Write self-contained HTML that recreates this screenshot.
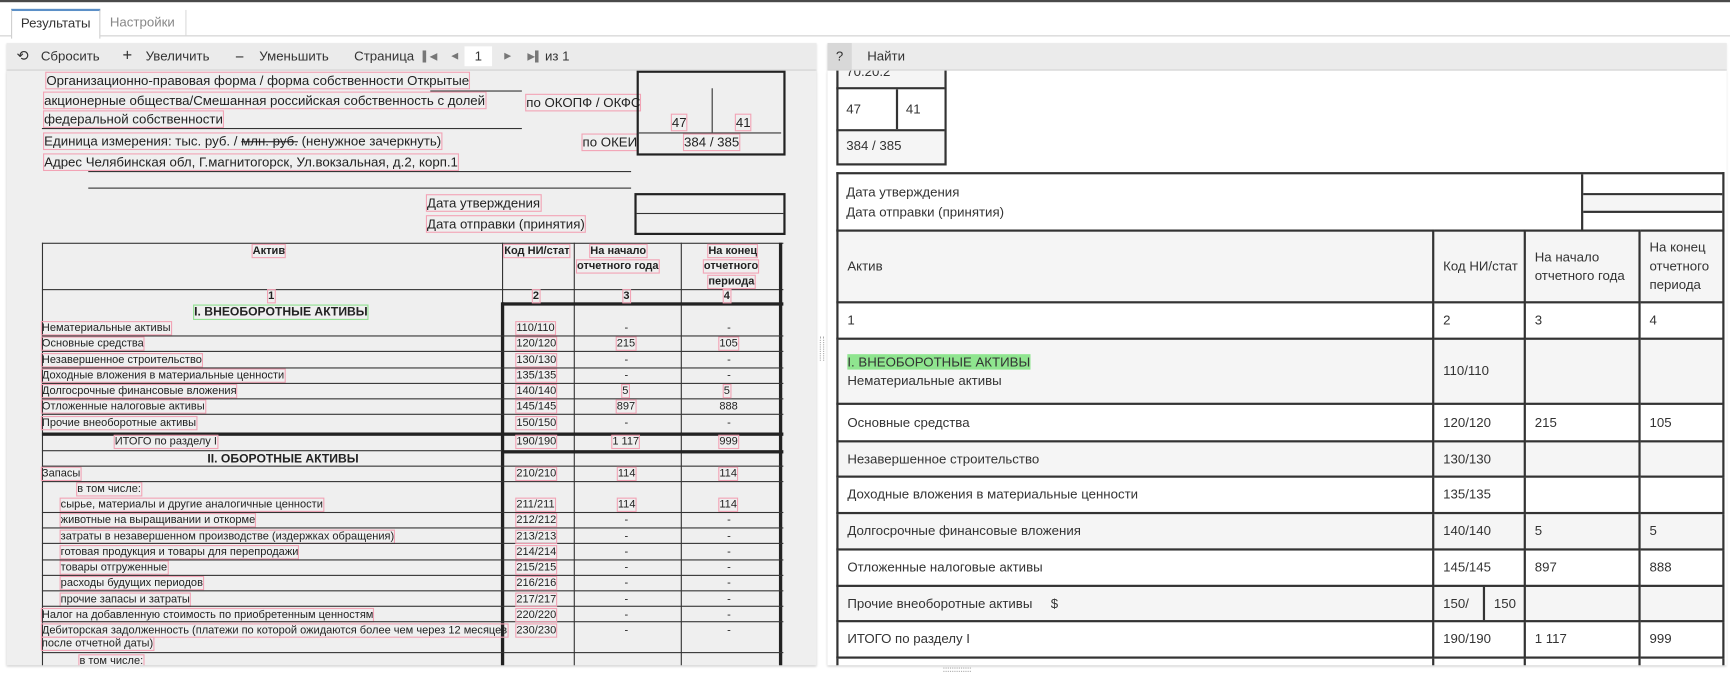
<!DOCTYPE html>
<html><head><meta charset="utf-8">
<style>
html,body{margin:0;padding:0;background:#fff;overflow:hidden;width:1730px;height:673px}
#w{position:absolute;left:0;top:0;width:1568px;height:610px;transform:scale(1.10332);transform-origin:0 0;font-family:"Liberation Sans",sans-serif;color:#333;overflow:hidden}
.a{position:absolute;white-space:nowrap}
.tb{position:absolute;top:39px;height:24px;background:#ebebeb;border-bottom:1px solid #d6d6d6;box-shadow:0 1px 2px rgba(0,0,0,.15);font-size:12px;line-height:24px}
.tb .a{top:0}
.sc{font-size:11px;color:#222;font-family:"Liberation Sans Narrow","Liberation Sans",sans-serif}
.r{outline:1px solid #f2a3b5;outline-offset:0}
.ln{position:absolute;background:#333}
.bx{position:absolute;border:2px solid #222}
.t{font-size:10px;font-family:"Liberation Sans Narrow","Liberation Sans",sans-serif;color:#222}
.c{position:absolute;font-size:12px;color:#333;white-space:nowrap}
table.g{position:absolute;left:758px;top:208px;border-collapse:collapse;table-layout:fixed;width:803px;font-size:12px;color:#333}
table.g td{border:2px solid #333;padding:0 0 0 8px;vertical-align:middle;line-height:17px}
</style></head><body><div id="w">
<div style="position:absolute;left:0;top:0;width:1568px;height:2px;background:#4a4a4a"></div>
<!-- tabs -->
<div style="position:absolute;left:0;top:32px;width:1568px;height:1px;background:#cfcfcf"></div>
<div class="a" style="left:10px;top:8px;width:79px;height:25px;background:#fff;border:1px solid #cfcfcf;border-top:2px solid #5b8fc7;border-bottom:none;font-size:12px;line-height:23px;text-align:center;color:#333">Результаты</div>
<div class="a" style="left:90px;top:9px;width:78px;height:23px;border-right:1px solid #dcdcdc;font-size:12px;line-height:23px;text-align:center;color:#888">Настройки</div>
<!-- left toolbar -->
<div class="tb" style="left:6px;width:734px">
 <span class="a" style="left:9px;font-size:13px">&#10226;</span>
 <span class="a" style="left:31px">Сбросить</span>
 <span class="a" style="left:105px;font-size:15px">+</span>
 <span class="a" style="left:126px">Увеличить</span>
 <span class="a" style="left:207px;font-size:14px">&minus;</span>
 <span class="a" style="left:229px">Уменьшить</span>
 <span class="a" style="left:315px">Страница</span>
 <span class="a" style="left:377px;font-size:9px;color:#777">&#9612;&#9664;</span>
 <span class="a" style="left:403px;font-size:8px;color:#777">&#9664;</span>
 <span class="a" style="left:415px;top:3px;width:25px;height:18px;background:#fff;line-height:18px;text-align:center">1</span>
 <span class="a" style="left:451px;font-size:8px;color:#777">&#9654;</span>
 <span class="a" style="left:472px;font-size:9px;color:#777">&#9654;&#9612;</span>
 <span class="a" style="left:488px">из 1</span>
</div>
<!-- left scan -->
<div style="position:absolute;left:6px;top:64px;width:734px;height:539px;background:#efefef;overflow:hidden;box-shadow:0 1px 2px rgba(0,0,0,.2)">
<div style="position:absolute;left:-6px;top:-64px;width:740px;height:603px;overflow:hidden">
<div class="a sc" style="left:42px;top:66px;font-size:12px"><span class="r">Организационно-правовая форма / форма собственности Открытые</span></div>
<div class="ln" style="left:390px;top:82px;width:83px;height:1px"></div>
<div class="a sc" style="left:40px;top:84px;font-size:12px"><span class="r">акционерные общества/Смешанная российская собственность с долей</span></div>
<div class="a sc" style="left:477px;top:86px;font-size:12px"><span class="r">по ОКОПФ / ОКФС</span></div>
<div class="a sc" style="left:40px;top:101px;font-size:12px"><span class="r">федеральной собственности</span></div>
<div class="ln" style="left:38px;top:116px;width:435px;height:1px"></div>
<div class="a sc" style="left:40px;top:121px;font-size:12px"><span class="r">Единица измерения: тыс. руб. / <s>млн. руб.</s> (ненужное зачеркнуть)</span></div>
<div class="a sc" style="left:528px;top:122px;font-size:12px"><span class="r">по ОКЕИ</span></div>
<div class="bx" style="left:577px;top:64px;width:131px;height:73px"></div>
<div class="ln" style="left:645px;top:80px;width:1px;height:40px"></div>
<div class="ln" style="left:579px;top:120px;width:129px;height:1px"></div>
<div class="a sc" style="left:609px;top:104px;font-size:12px"><span class="r">47</span></div>
<div class="a sc" style="left:667px;top:104px;font-size:12px"><span class="r">41</span></div>
<div class="a sc" style="left:620px;top:122px;font-size:12px"><span class="r">384 / 385</span></div>
<div class="a sc" style="left:40px;top:140px;font-size:12px"><span class="r">Адрес Челябинская обл, Г.магнитогорск, Ул.вокзальная, д.2, корп.1</span></div>
<div class="ln" style="left:80px;top:155px;width:492px;height:1px"></div>
<div class="ln" style="left:80px;top:170px;width:492px;height:1px"></div>
<div class="a sc" style="left:387px;top:177px;font-size:12px"><span class="r">Дата утверждения</span></div>
<div class="a sc" style="left:387px;top:196px;font-size:12px"><span class="r">Дата отправки (принятия)</span></div>
<div class="bx" style="left:575px;top:175px;width:133px;height:34px"></div>
<div class="ln" style="left:577px;top:193px;width:133px;height:1px"></div>
<!-- table -->
<div class="ln" style="left:38px;top:220px;width:672px;height:1px"></div>
<div class="ln" style="left:38px;top:220px;width:1px;height:390px"></div>
<div class="ln" style="left:455px;top:220px;width:1px;height:55px"></div>
<div class="ln" style="left:520px;top:220px;width:1px;height:390px"></div>
<div class="ln" style="left:617px;top:220px;width:1px;height:390px"></div>
<div class="ln" style="left:38px;top:262px;width:672px;height:1px"></div>
<div class="ln" style="left:455px;top:274px;width:255px;height:3px;background:#222"></div>
<div class="ln" style="left:454px;top:274px;width:3px;height:340px;background:#222"></div>
<div class="ln" style="left:706px;top:220px;width:3px;height:390px;background:#222"></div>
<div class="a t" style="left:229px;top:222px;font-weight:bold"><span class="r">Актив</span></div>
<div class="a t" style="left:457px;top:222px;font-weight:bold"><span class="r">Код НИ/стат</span></div>
<div class="a t" style="left:535px;top:222px;font-weight:bold"><span class="r">На начало</span></div>
<div class="a t" style="left:523px;top:236px;font-weight:bold"><span class="r">отчетного года</span></div>
<div class="a t" style="left:642px;top:222px;font-weight:bold"><span class="r">На конец</span></div>
<div class="a t" style="left:638px;top:236px;font-weight:bold"><span class="r">отчетного</span></div>
<div class="a t" style="left:642px;top:250px;font-weight:bold"><span class="r">периода</span></div>
<div class="a t" style="left:243px;top:263px;font-weight:bold"><span class="r">1</span></div>
<div class="a t" style="left:483px;top:263px;font-weight:bold"><span class="r">2</span></div>
<div class="a t" style="left:565px;top:263px;font-weight:bold"><span class="r">3</span></div>
<div class="a t" style="left:656px;top:263px;font-weight:bold"><span class="r">4</span></div>
<div class="a t" style="left:176px;top:277px;font-weight:bold;font-size:11px"><span style="outline:1px solid #8ee08e">I. ВНЕОБОРОТНЫЕ АКТИВЫ</span></div>
<div class="a t" style="left:38px;top:292px"><span class="r">Нематериальные активы</span></div>
<div class="a t" style="left:38px;top:306px"><span class="r">Основные средства</span></div>
<div class="a t" style="left:38px;top:321px"><span class="r">Незавершенное строительство</span></div>
<div class="a t" style="left:38px;top:335px"><span class="r">Доходные вложения в материальные ценности</span></div>
<div class="a t" style="left:38px;top:349px"><span class="r">Долгосрочные финансовые вложения</span></div>
<div class="a t" style="left:38px;top:363px"><span class="r">Отложенные налоговые активы</span></div>
<div class="a t" style="left:38px;top:378px"><span class="r">Прочие внеоборотные активы</span></div>
<div class="ln" style="left:38px;top:392px;width:672px;height:3px;background:#222"></div>
<div class="a t" style="left:104px;top:395px"><span class="r">ИТОГО по разделу I</span></div>
<div class="ln" style="left:455px;top:408px;width:255px;height:3px;background:#222"></div>
<div class="ln" style="left:38px;top:408px;width:417px;height:1px"></div>
<div class="a t" style="left:188px;top:410px;font-weight:bold;font-size:11px">II. ОБОРОТНЫЕ АКТИВЫ</div>
<div class="a t" style="left:38px;top:424px"><span class="r">Запасы</span></div>
<div class="a t" style="left:70px;top:438px"><span class="r">в том числе:</span></div>
<div class="a t" style="left:55px;top:452px"><span class="r">сырье, материалы и другие аналогичные ценности</span></div>
<div class="a t" style="left:55px;top:466px"><span class="r">животные на выращивании и откорме</span></div>
<div class="a t" style="left:55px;top:481px"><span class="r">затраты в незавершенном производстве (издержках обращения)</span></div>
<div class="a t" style="left:55px;top:495px"><span class="r">готовая продукция и товары для перепродажи</span></div>
<div class="a t" style="left:55px;top:509px"><span class="r">товары отгруженные</span></div>
<div class="a t" style="left:55px;top:523px"><span class="r">расходы будущих периодов</span></div>
<div class="a t" style="left:55px;top:538px"><span class="r">прочие запасы и затраты</span></div>
<div class="a t" style="left:38px;top:552px"><span class="r">Налог на добавленную стоимость по приобретенным ценностям</span></div>
<div class="a t" style="left:38px;top:566px"><span class="r">Дебиторская задолженность (платежи по которой ожидаются более чем через 12 месяцев</span></div>
<div class="a t" style="left:38px;top:578px"><span class="r">после отчетной даты)</span></div>
<div class="a t" style="left:72px;top:594px"><span class="r">в том числе:</span></div>
<!-- row lines -->
<div class="ln" style="left:38px;top:304px;width:672px;height:1px"></div>
<div class="ln" style="left:38px;top:318px;width:672px;height:1px"></div>
<div class="ln" style="left:38px;top:333px;width:672px;height:1px"></div>
<div class="ln" style="left:38px;top:347px;width:672px;height:1px"></div>
<div class="ln" style="left:38px;top:361px;width:672px;height:1px"></div>
<div class="ln" style="left:38px;top:375px;width:672px;height:1px"></div>
<div class="ln" style="left:38px;top:422px;width:672px;height:1px"></div>
<div class="ln" style="left:38px;top:436px;width:672px;height:1px"></div>
<div class="ln" style="left:38px;top:464px;width:672px;height:1px"></div>
<div class="ln" style="left:38px;top:478px;width:672px;height:1px"></div>
<div class="ln" style="left:38px;top:492px;width:672px;height:1px"></div>
<div class="ln" style="left:38px;top:507px;width:672px;height:1px"></div>
<div class="ln" style="left:38px;top:521px;width:672px;height:1px"></div>
<div class="ln" style="left:38px;top:535px;width:672px;height:1px"></div>
<div class="ln" style="left:38px;top:549px;width:672px;height:1px"></div>
<div class="ln" style="left:38px;top:563px;width:672px;height:1px"></div>
<div class="ln" style="left:38px;top:591px;width:672px;height:1px"></div>
<!-- values -->
<div class="a t" style="left:468px;top:292px"><span class="r">110/110</span></div>
<div class="a t" style="left:468px;top:306px"><span class="r">120/120</span></div>
<div class="a t" style="left:468px;top:321px"><span class="r">130/130</span></div>
<div class="a t" style="left:468px;top:335px"><span class="r">135/135</span></div>
<div class="a t" style="left:468px;top:349px"><span class="r">140/140</span></div>
<div class="a t" style="left:468px;top:363px"><span class="r">145/145</span></div>
<div class="a t" style="left:468px;top:378px"><span class="r">150/150</span></div>
<div class="a t" style="left:468px;top:395px"><span class="r">190/190</span></div>
<div class="a t" style="left:468px;top:424px"><span class="r">210/210</span></div>
<div class="a t" style="left:468px;top:452px"><span class="r">211/211</span></div>
<div class="a t" style="left:468px;top:466px"><span class="r">212/212</span></div>
<div class="a t" style="left:468px;top:481px"><span class="r">213/213</span></div>
<div class="a t" style="left:468px;top:495px"><span class="r">214/214</span></div>
<div class="a t" style="left:468px;top:509px"><span class="r">215/215</span></div>
<div class="a t" style="left:468px;top:523px"><span class="r">216/216</span></div>
<div class="a t" style="left:468px;top:538px"><span class="r">217/217</span></div>
<div class="a t" style="left:468px;top:552px"><span class="r">220/220</span></div>
<div class="a t" style="left:468px;top:566px"><span class="r">230/230</span></div>
<div class="a t" style="left:566px;top:292px">-</div>
<div class="a t" style="left:559px;top:306px"><span class="r">215</span></div>
<div class="a t" style="left:566px;top:321px">-</div>
<div class="a t" style="left:566px;top:335px">-</div>
<div class="a t" style="left:564px;top:349px"><span class="r">5</span></div>
<div class="a t" style="left:559px;top:363px"><span class="r">897</span></div>
<div class="a t" style="left:566px;top:378px">-</div>
<div class="a t" style="left:555px;top:395px"><span class="r">1 117</span></div>
<div class="a t" style="left:560px;top:424px"><span class="r">114</span></div>
<div class="a t" style="left:560px;top:452px"><span class="r">114</span></div>
<div class="a t" style="left:566px;top:466px">-</div><div class="a t" style="left:566px;top:481px">-</div>
<div class="a t" style="left:566px;top:495px">-</div><div class="a t" style="left:566px;top:509px">-</div>
<div class="a t" style="left:566px;top:523px">-</div><div class="a t" style="left:566px;top:538px">-</div>
<div class="a t" style="left:566px;top:552px">-</div><div class="a t" style="left:566px;top:566px">-</div>
<div class="a t" style="left:659px;top:292px">-</div>
<div class="a t" style="left:652px;top:306px"><span class="r">105</span></div>
<div class="a t" style="left:659px;top:321px">-</div>
<div class="a t" style="left:659px;top:335px">-</div>
<div class="a t" style="left:656px;top:349px"><span class="r">5</span></div>
<div class="a t" style="left:652px;top:363px">888</div>
<div class="a t" style="left:659px;top:378px">-</div>
<div class="a t" style="left:652px;top:395px"><span class="r">999</span></div>
<div class="a t" style="left:652px;top:424px"><span class="r">114</span></div>
<div class="a t" style="left:652px;top:452px"><span class="r">114</span></div>
<div class="a t" style="left:659px;top:466px">-</div><div class="a t" style="left:659px;top:481px">-</div>
<div class="a t" style="left:659px;top:495px">-</div><div class="a t" style="left:659px;top:509px">-</div>
<div class="a t" style="left:659px;top:523px">-</div><div class="a t" style="left:659px;top:538px">-</div>
<div class="a t" style="left:659px;top:552px">-</div><div class="a t" style="left:659px;top:566px">-</div>
</div></div>
<div class="a" style="left:743px;top:305px;width:2px;height:22px;border-left:1px dotted #aaa;border-right:1px dotted #aaa"></div>
<!-- right toolbar -->
<div class="tb" style="left:750px;width:815px">
 <span class="a" style="left:0;width:22px;height:24px;background:#d8d8d8;text-align:center">?</span>
 <span class="a" style="left:36px">Найти</span>
</div>
<!-- right content -->
<div style="position:absolute;left:750px;top:64px;width:815px;height:539px;background:#fff;overflow:hidden;box-shadow:0 1px 2px rgba(0,0,0,.2)">
<div style="position:absolute;left:-750px;top:-64px;width:1565px;height:603px;overflow:hidden">
 <div style="position:absolute;left:758px;top:50px;width:96px;height:96px;border:2px solid #333;background:#f5f5f5"></div>
 <div class="ln" style="left:758px;top:79px;width:98px;height:2px"></div>
 <div class="ln" style="left:758px;top:117px;width:98px;height:2px"></div>
 <div style="position:absolute;left:760px;top:81px;width:96px;height:36px;background:#fff"></div>
 <div class="ln" style="left:812px;top:81px;width:2px;height:36px"></div>
 <div class="c" style="left:767px;top:58px">70.20.2</div>
 <div class="c" style="left:767px;top:92px">47</div>
 <div class="c" style="left:821px;top:92px">41</div>
 <div class="c" style="left:767px;top:125px">384 / 385</div>
 <div style="position:absolute;left:758px;top:156px;width:801px;height:51px;border:2px solid #333;border-bottom:none"></div>
 <div class="ln" style="left:1433px;top:158px;width:2px;height:50px"></div>
 <div class="ln" style="left:1435px;top:175px;width:126px;height:2px"></div>
 <div style="position:absolute;left:1435px;top:177px;width:124px;height:14px;background:#f5f5f5"></div>
 <div class="ln" style="left:1435px;top:191px;width:126px;height:2px"></div>
 <div class="c" style="left:767px;top:167px">Дата утверждения</div>
 <div class="c" style="left:767px;top:185px">Дата отправки (принятия)</div>
 <table class="g">
  <colgroup><col style="width:540px"><col style="width:83px"><col style="width:104px"><col style="width:76px"></colgroup>
  <tr style="height:65px;background:#f5f5f5"><td>Актив</td><td>Код НИ/стат</td><td>На начало отчетного года</td><td>На конец отчетного периода</td></tr>
  <tr style="height:33px"><td>1</td><td>2</td><td>3</td><td>4</td></tr>
  <tr style="height:59px;background:#f5f5f5"><td><span style="background:#8fe58f">I. ВНЕОБОРОТНЫЕ АКТИВЫ</span><br>Нематериальные активы</td><td>110/110</td><td></td><td></td></tr>
  <tr style="height:34px"><td>Основные средства</td><td>120/120</td><td>215</td><td>105</td></tr>
  <tr style="height:32px;background:#f5f5f5"><td>Незавершенное строительство</td><td>130/130</td><td></td><td></td></tr>
  <tr style="height:33px"><td>Доходные вложения в материальные ценности</td><td>135/135</td><td></td><td></td></tr>
  <tr style="height:33px;background:#f5f5f5"><td>Долгосрочные финансовые вложения</td><td>140/140</td><td>5</td><td>5</td></tr>
  <tr style="height:33px"><td>Отложенные налоговые активы</td><td>145/145</td><td>897</td><td>888</td></tr>
  <tr style="height:32px;background:#f5f5f5"><td>Прочие внеоборотные активы &nbsp;&nbsp;&nbsp;&nbsp;$</td><td style="padding:0"><div style="display:flex;height:30px;line-height:30px"><span style="width:36px;padding-left:8px;border-right:2px solid #333">150/</span><span style="padding-left:8px">150</span></div></td><td></td><td></td></tr>
  <tr style="height:33px"><td>ИТОГО по разделу I</td><td>190/190</td><td>1 117</td><td>999</td></tr>
  <tr style="height:33px"><td></td><td></td><td></td><td></td></tr>
 </table>
</div></div>
<div class="a" style="left:855px;top:605px;width:25px;height:2px;border-top:1px dotted #aaa;border-bottom:1px dotted #aaa"></div>
</div></body></html>
